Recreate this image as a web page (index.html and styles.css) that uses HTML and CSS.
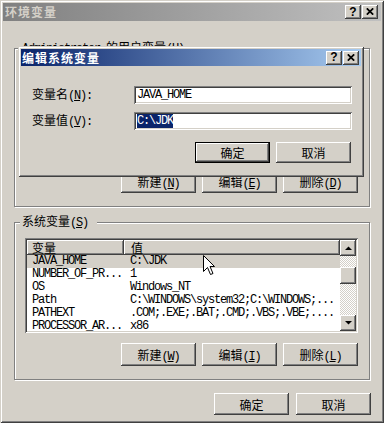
FILE: index.html
```html
<!DOCTYPE html>
<html>
<head>
  <title>环境变量</title>
  <link rel="stylesheet" href="styles.css">
</head>
<body>
  <div class="window">
    <div class="titlebar inactive">
      <span class="title">环境变量</span>
      <div class="title-btns">
        <span class="tbtn raised">?</span>
        <span class="tbtn raised"><svg width="8" height="7" viewBox="0 0 8 7"><path d="M0.8 0.3 L7.2 6.7 M7.2 0.3 L0.8 6.7" stroke="#000" stroke-width="1.7"/></svg></span>
      </div>
    </div>

    <div class="body">
      <!-- user variables (the dialog covers the list) -->
      <fieldset class="group user">
        <legend><span class="m">Administrator </span>的用户变量<span class="m">(<u>U</u>)</span></legend>
        <div class="list">
          <div class="list-main">
            <div class="list-head">
              <div class="hcell c1"></div>
              <div class="hcell c2"></div>
            </div>
          </div>
        </div>
        <div class="btn-row">
          <button class="btn raised">新建<span class="m">(<u>N</u>)</span></button>
          <button class="btn raised">编辑<span class="m">(<u>E</u>)</span></button>
          <button class="btn raised">删除<span class="m">(<u>D</u>)</span></button>
        </div>
      </fieldset>

      <!-- system variables -->
      <fieldset class="group system">
        <legend>系统变量<span class="m">(<u>S</u>)</span></legend>
        <div class="list">
          <div class="list-main">
            <div class="list-head">
              <div class="hcell c1">变量</div>
              <div class="hcell c2">值</div>
            </div>
            <div class="row m selected"><div class="c1">JAVA_HOME</div><div class="c2">C:\JDK</div></div>
            <div class="row m"><div class="c1">NUMBER_OF_PR...</div><div class="c2">1</div></div>
            <div class="row m"><div class="c1">OS</div><div class="c2">Windows_NT</div></div>
            <div class="row m"><div class="c1">Path</div><div class="c2">C:\WINDOWS\system32;C:\WINDOWS;...</div></div>
            <div class="row m"><div class="c1">PATHEXT</div><div class="c2">.COM;.EXE;.BAT;.CMD;.VBS;.VBE;....</div></div>
            <div class="row m"><div class="c1">PROCESSOR_AR...</div><div class="c2">x86</div></div>
          </div>
          <div class="scrollbar">
            <div class="sbtn raised"><svg width="7" height="4" viewBox="0 0 7 4"><polygon points="0,4 7,4 3.5,0.5" fill="#000"/></svg></div>
            <div class="track"><div class="thumb raised"></div></div>
            <div class="sbtn raised"><svg width="7" height="4" viewBox="0 0 7 4"><polygon points="0,0 7,0 3.5,3.5" fill="#000"/></svg></div>
          </div>
        </div>
        <div class="btn-row">
          <button class="btn raised">新建<span class="m">(<u>W</u>)</span></button>
          <button class="btn raised">编辑<span class="m">(<u>I</u>)</span></button>
          <button class="btn raised">删除<span class="m">(<u>L</u>)</span></button>
        </div>
      </fieldset>

      <div class="btn-row bottom">
        <button class="btn raised">确定</button>
        <button class="btn raised">取消</button>
      </div>
    </div>

    <!-- edit dialog on top of the window -->
    <div class="dialog">
      <div class="titlebar active">
        <span class="title">编辑系统变量</span>
        <div class="title-btns">
          <span class="tbtn raised">?</span>
          <span class="tbtn raised"><svg width="8" height="7" viewBox="0 0 8 7"><path d="M0.8 0.3 L7.2 6.7 M7.2 0.3 L0.8 6.7" stroke="#000" stroke-width="1.7"/></svg></span>
        </div>
      </div>
      <div class="dialog-body">
        <div class="field">
          <label class="label">变量名<span class="m">(<u>N</u>):</span></label>
          <div class="input m">JAVA_HOME</div>
        </div>
        <div class="field">
          <label class="label">变量值<span class="m">(<u>V</u>):</span></label>
          <div class="input m"><span class="sel">C:\JDK</span></div>
        </div>
        <div class="btn-row dlg">
          <button class="btn raised default">确定</button>
          <button class="btn raised">取消</button>
        </div>
      </div>
    </div>

    <svg class="cursor" width="13" height="21" viewBox="0 0 13 21">
      <path d="M0.5 0.5 L0.5 16.5 L4.5 12.5 L7.5 19.5 L10 18.5 L7 11.5 L11.5 11.5 Z" fill="#fff" stroke="#000" stroke-width="1"/>
    </svg>
  </div>
</body>
</html>
```

FILE: styles.css
```css
* {
  box-sizing: border-box;
}

body {
  margin: 0;
  background: #d4d0c8;
  font-family: "Noto Sans CJK SC", sans-serif;
  font-size: 12px;
  color: #000;
}

/* latin text, 6px per char like the old bitmap font */
.m {
  font-family: "Liberation Mono", monospace;
  font-size: 12px;
  letter-spacing: -1.2px;
}

.raised {
  background: #d4d0c8;
  box-shadow: inset -1px -1px #404040, inset 1px 1px #fff, inset -2px -2px #808080, inset 2px 2px #d4d0c8;
}

.window {
  position: relative;
  width: 384px;
  height: 423px;
  padding: 3px;
  background: #d4d0c8;
  box-shadow: inset 1px 1px #d4d0c8, inset -1px -1px #404040, inset 2px 2px #fff, inset -2px -2px #808080;
}

.titlebar {
  display: flex;
  align-items: center;
  height: 18px;
  padding: 0 3px 0 2px;
}

.titlebar.inactive {
  background: linear-gradient(to right, #808080, #c0c0c0);
  color: #d4d0c8;
}

.titlebar.active {
  height: 17px;
  padding: 0 2px 0 1px;
  background: linear-gradient(to right, #0a246a, #a6caf0);
  color: #fff;
}

.title {
  font-weight: bold;
  letter-spacing: 1px;
  line-height: 16px;
}

.title-btns {
  margin-left: auto;
  display: flex;
  gap: 1px;
}

.tbtn {
  width: 16px;
  height: 14px;
  display: flex;
  align-items: center;
  justify-content: center;
  color: #000;
  font-family: "Liberation Sans", sans-serif;
  font-weight: bold;
  font-size: 12px;
  line-height: 14px;
  padding-bottom: 1px;
}

.body {
  padding: 0 11px;
}

.group {
  margin: 0;
  min-width: 0;
  padding: 8px 11px 13px 10px;
  border: 1px solid #808080;
  box-shadow: inset 1px 1px #fff, 1px 1px #fff;
}

.group.user {
  margin-top: 19px;
  padding-top: 9px;
}

.group.system {
  margin-top: 7px;
}

.group legend {
  margin-left: -5px;
  padding: 0 9px 0 2px;
  line-height: 13px;
  background: #d4d0c8;
}

.list {
  display: flex;
  height: 95px;
  padding: 2px;
  background: #fff;
  box-shadow: inset 1px 1px #808080, inset -1px -1px #fff, inset 2px 2px #404040, inset -2px -2px #d4d0c8;
}

.list-main {
  flex: 1;
  min-width: 0;
  overflow: hidden;
}

.list-head {
  display: flex;
  height: 15px;
}

.hcell {
  background: #d4d0c8;
  box-shadow: inset -1px -1px #404040, inset 1px 1px #fff, inset -2px -2px #808080;
  line-height: 15px;
}

.hcell.c1 {
  width: 97px;
  padding-left: 5px;
}

.hcell.c2 {
  flex: 1;
  padding-left: 7px;
}

.row {
  display: flex;
  height: 13px;
  line-height: 13px;
  white-space: nowrap;
}

.row.selected {
  background: #d4d0c8;
}

.row .c1 {
  width: 97px;
  padding-left: 5px;
  flex-shrink: 0;
}

.row .c2 {
  padding-left: 6px;
}

.scrollbar {
  width: 16px;
  display: flex;
  flex-direction: column;
}

.sbtn {
  height: 16px;
  display: flex;
  align-items: center;
  justify-content: center;
}

.track {
  flex: 1;
  padding-top: 11px;
  background: repeating-conic-gradient(#fff 0% 25%, #d4d0c8 0% 50%) 0 0 / 2px 2px;
}

.thumb {
  height: 17px;
}

.btn-row {
  display: flex;
  justify-content: flex-end;
  gap: 6px;
  margin-top: 10px;
}

.btn-row.bottom {
  margin-top: 13px;
  margin-right: -1px;
  gap: 7px;
}

.btn {
  width: 75px;
  height: 23px;
  border: none;
  padding: 0;
  font-family: "Noto Sans CJK SC", sans-serif;
  font-size: 12px;
  color: #000;
}

.btn-row.bottom .btn {
  height: 22px;
}

.btn.default {
  box-shadow: inset 0 0 0 1px #000, inset -2px -2px #404040, inset 2px 2px #fff, inset -3px -3px #808080;
}

.dialog {
  position: absolute;
  left: 18px;
  top: 46px;
  width: 346px;
  height: 131px;
  padding: 3px;
  background: #d4d0c8;
  box-shadow: inset 1px 1px #d4d0c8, inset -1px -1px #404040, inset 2px 2px #fff, inset -2px -2px #808080;
}

.dialog-body {
  padding: 20px 9px 11px 11px;
}

.field {
  display: flex;
  align-items: center;
  height: 18px;
  margin-bottom: 8px;
}

.label {
  flex: 0 0 102px;
  line-height: 16px;
}

.input {
  flex: 1;
  height: 18px;
  padding: 2px 3px 0;
  background: #fff;
  line-height: 14px;
  box-shadow: inset 1px 1px #808080, inset -1px -1px #fff, inset 2px 2px #404040, inset -2px -2px #d4d0c8;
}

.sel {
  background: #0a246a;
  color: #fff;
}

.btn-row.dlg {
  margin-top: 12px;
  padding-right: 1px;
}

.btn-row.dlg .btn {
  height: 21px;
}

.cursor {
  position: absolute;
  left: 203px;
  top: 255px;
}
```
